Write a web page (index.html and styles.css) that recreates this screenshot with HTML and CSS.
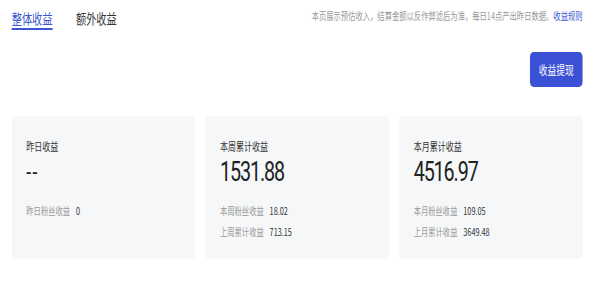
FILE: index.html
```html
<!DOCTYPE html>
<html lang="zh-CN">
<head>
  <meta charset="UTF-8" />
  <meta name="viewport" content="width=device-width, initial-scale=1.0" />
  <title>收益概览</title>
  <link rel="stylesheet" href="styles.css">
</head>
<body>
  <div class="frame">
    <div class="page">
      <div class="top-bar">
        <div class="tabs">
          <span class="tab active">整体收益</span>
          <span class="tab">额外收益</span>
        </div>
        <p class="note">本页展示预估收入，结算金额以反作弊滤后为准，每日14点产出昨日数据。<a href="#">收益规则</a></p>
      </div>

      <div class="actions">
        <button class="btn-withdraw">收益提现</button>
      </div>

      <div class="cards">
        <div class="card">
          <div class="card-title">昨日收益</div>
          <div class="card-num empty">--</div>
          <div class="card-rows">
            <div class="row"><span class="row-label">昨日粉丝收益</span><span class="row-value">0</span></div>
          </div>
        </div>
        <div class="card">
          <div class="card-title">本周累计收益</div>
          <div class="card-num">1531.88</div>
          <div class="card-rows">
            <div class="row"><span class="row-label">本周粉丝收益</span><span class="row-value">18.02</span></div>
            <div class="row"><span class="row-label">上周累计收益</span><span class="row-value">713.15</span></div>
          </div>
        </div>
        <div class="card">
          <div class="card-title">本月累计收益</div>
          <div class="card-num">4516.97</div>
          <div class="card-rows">
            <div class="row"><span class="row-label">本月粉丝收益</span><span class="row-value">109.05</span></div>
            <div class="row"><span class="row-label">上月累计收益</span><span class="row-value">3649.48</span></div>
          </div>
        </div>
      </div>
    </div>
  </div>
</body>
</html>
```

FILE: styles.css
```css
html, body {
  margin: 0;
  padding: 0;
  background: #fff;
  overflow: hidden;
}

body {
  font-family: "Noto Sans CJK SC", "Noto Sans", sans-serif;
  color: #333;
}

.frame {
  width: 600px;
  overflow: hidden;
}

.page {
  width: 822px;
  box-sizing: border-box;
  padding: 0 24px 0 16px;
  transform: scaleX(0.73);
  transform-origin: 0 0;
}

.top-bar {
  display: flex;
  justify-content: space-between;
  align-items: flex-start;
}

.tabs {
  display: flex;
}

.tab {
  font-size: 14px;
  line-height: 20px;
  padding-top: 8px;
  margin-right: 32px;
  color: #333;
  border-bottom: 2px solid transparent;
}

.tab.active {
  color: #3a56d4;
  border-bottom-color: #3a56d4;
}

.note {
  margin: 0;
  padding-top: 9px;
  font-size: 10px;
  line-height: 14px;
  color: #999;
}

.note a {
  color: #3a56d4;
  text-decoration: none;
}

.actions {
  display: flex;
  justify-content: flex-end;
  margin-top: 22px;
}

.btn-withdraw {
  height: 35px;
  width: 72px;
  padding: 0;
  border: none;
  border-radius: 5px;
  background: #3b52d6;
  color: #fff;
  font-family: inherit;
  font-size: 12px;
}

.cards {
  display: grid;
  grid-template-columns: repeat(3, 1fr);
  gap: 14px;
  margin-top: 29px;
}

.card {
  height: 143px;
  box-sizing: border-box;
  padding: 22px 20px 0;
  background: #f5f7f8;
  border-radius: 5px;
}

.card-title {
  font-size: 11px;
  line-height: 16px;
  color: #333;
}

.card-num {
  font-family: "Roboto", sans-serif;
  font-size: 27px;
  line-height: 36px;
  letter-spacing: -1.5px;
  color: #222;
}

.card-num.empty {
  font-size: 24px;
  letter-spacing: 2px;
}

.card-rows {
  margin-top: 10px;
}

.row {
  font-size: 10px;
  line-height: 21px;
}

.row-label {
  color: #999;
}

.row-value {
  margin-left: 8px;
  color: #333;
}
```
